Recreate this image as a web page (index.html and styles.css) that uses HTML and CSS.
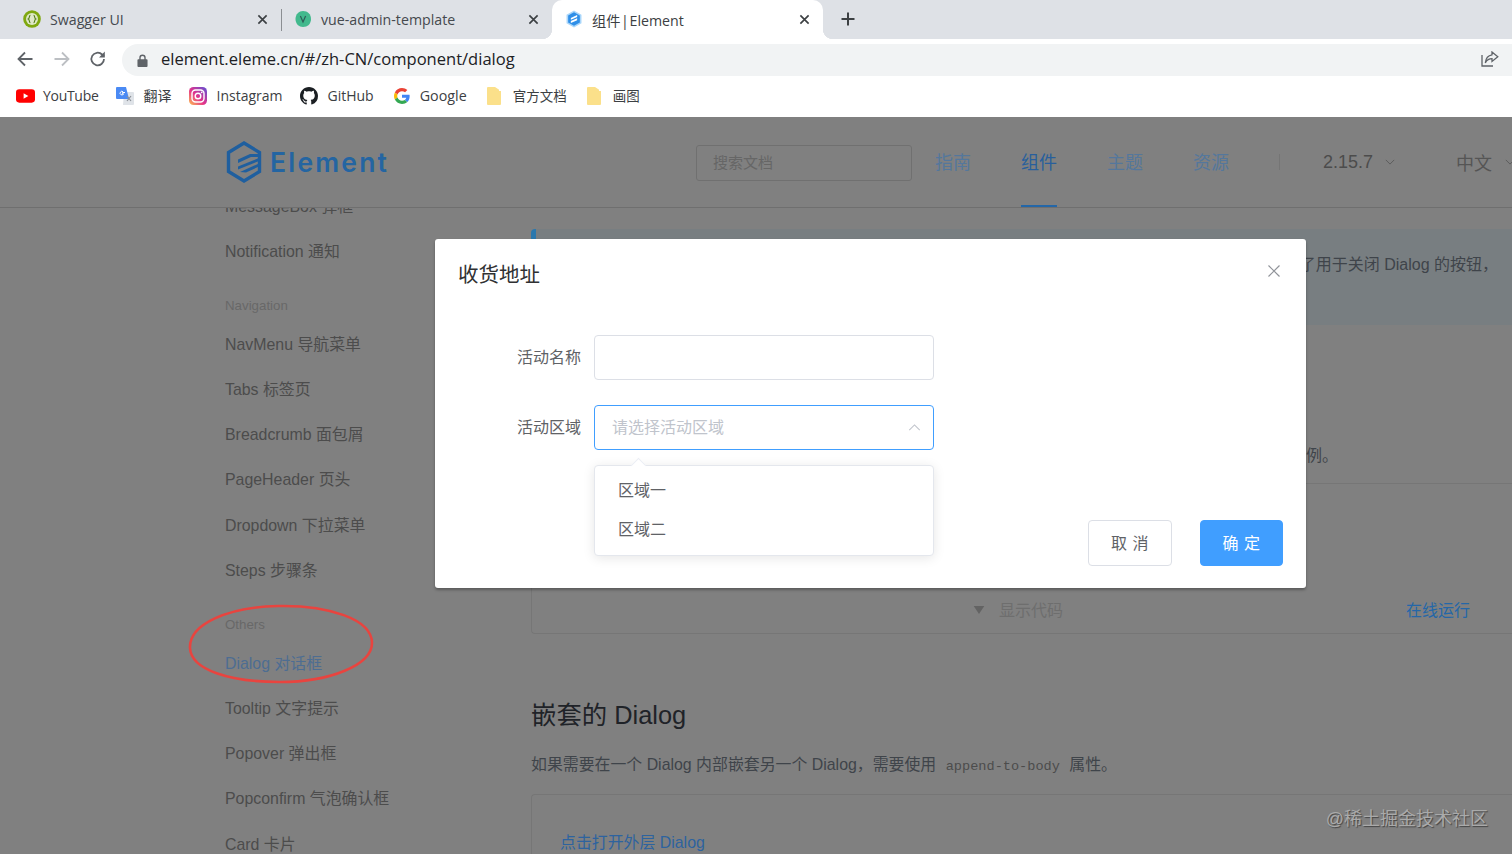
FILE: index.html
```html
<!DOCTYPE html>
<html lang="zh-CN">
<head>
<meta charset="utf-8">
<title>组件 | Element</title>
<link rel="stylesheet" href="styles.css">
</head>
<body>
<div class="tabstrip">
  <div class="tab tab-sep">
    <svg class="favicon" viewBox="0 0 18 18"><circle cx="9" cy="9" r="8.800" fill="#7fa80f"/><circle cx="9" cy="9" r="6" fill="#dfe8c8"/><path d="M7.400 5.400C6 5.400 6.600 8.600 5.400 9c1.200.4.600 3.600 2 3.600M10.600 5.400c1.400 0 .8 3.200 2 3.600-1.200.4-.6 3.600-2 3.600" fill="none" stroke="#4f7a10" stroke-width="1.100"/></svg>
    <span class="tab-title">Swagger UI</span>
    <svg class="tab-close" viewBox="0 0 12 12"><path d="M1.500 1.500l9 9M10.500 1.500l-9 9"/></svg>
  </div>
  <div class="tab">
    <svg class="favicon" viewBox="0 0 18 18"><path d="M9 1c4.600 0 8 3 8 8s-3.400 8-8 8c-4 0-7.500-3-7.500-8S5 1 9 1z" fill="#42b98d"/><path d="M6.400 6l2.600 6 2.600-6" fill="none" stroke="#2f5c58" stroke-width="1.200"/></svg>
    <span class="tab-title">vue-admin-template</span>
    <svg class="tab-close" viewBox="0 0 12 12"><path d="M1.500 1.500l9 9M10.500 1.500l-9 9"/></svg>
  </div>
  <div class="tab tab-active">
    <svg class="favicon" viewBox="0 0 18 20"><path d="M9 .5l8.300 4.800v9.400L9 19.500.7 14.700V5.300z" fill="#a9d6fa"/><path d="M9 2.500l6.500 3.700v7.600L9 17.500l-6.500-3.700V6.200z" fill="#2f8fe8"/><path d="M5.500 8.800l7-3.300v2.200l-7 3.200zM5.500 12.300l7-3.200v2.200l-7 3.200z" fill="#fff"/></svg>
    <span class="tab-title">组件 | Element</span>
    <svg class="tab-close" viewBox="0 0 12 12"><path d="M1.500 1.500l9 9M10.500 1.500l-9 9"/></svg>
  </div>
  <svg class="new-tab" viewBox="0 0 14 14"><path d="M7 .5v13M.5 7h13"/></svg>
</div>

<div class="toolbar">
  <svg class="nav-icon" viewBox="0 0 18 18"><path d="M16.500 9H2.500M9 2.500L2.500 9 9 15.500"/></svg>
  <svg class="nav-icon nav-off" viewBox="0 0 18 18"><path d="M1.500 9h14M9 2.500L15.500 9 9 15.500"/></svg>
  <svg class="nav-icon" viewBox="0 0 18 18"><path d="M15 9a6.300 6.300 0 1 1-1.900-4.500L15 6.300"/><path class="nav-fill" d="M15.800 1.600v5.800H10z"/></svg>
  <div class="urlbar">
    <svg class="lock" viewBox="0 0 12 14"><path d="M2.500 5.500V4a3.500 3.500 0 0 1 7 0v1.500h1a1 1 0 0 1 1 1V13a1 1 0 0 1-1 1h-9a1 1 0 0 1-1-1V6.500a1 1 0 0 1 1-1zM4 5.500h4V4a2 2 0 0 0-4 0z"/></svg>
    <span class="url">element.eleme.cn/#/zh-CN/component/dialog</span>
    <svg class="share" viewBox="0 0 18 16"><path d="M1 4v11h11"/><path d="M11 1l5.800 4.800L11 10.500V7.700C8 7.700 6 8.900 4.300 11.800 4.800 7.200 7.500 4.300 11 3.800z"/></svg>
  </div>
</div>

<div class="bookmarks">
  <div class="bm"><svg class="bm-icon bm-yt" viewBox="0 0 20 14"><rect width="20" height="14" rx="3.500" fill="#f00"/><path d="M8 4l5 3-5 3z" fill="#fff"/></svg><span class="bm-yt-text">YouTube</span></div>
  <div class="bm"><svg class="bm-icon" viewBox="0 0 18 18"><path d="M8 5h9a1 1 0 0 1 1 1v11a1 1 0 0 1-1 1H7z" fill="#dfe3e8"/><path d="M1 0h9l3 12H1a1 1 0 0 1-1-1V1a1 1 0 0 1 1-1z" fill="#4a8af4"/><path d="M9 5.500H6.400v1.300h1.200a1.800 1.800 0 1 1-.5-2" fill="none" stroke="#fff" stroke-width="1"/><path d="M11 9l4 5M15 9l-4 5" stroke="#8a8f96" stroke-width="1.200"/></svg><span>翻译</span></div>
  <div class="bm"><svg class="bm-icon" viewBox="0 0 18 18"><defs><linearGradient id="ig" x1="0" y1="1" x2="1" y2="0"><stop offset="0" stop-color="#fdc04f"/><stop offset=".45" stop-color="#e5338a"/><stop offset="1" stop-color="#5b50d6"/></linearGradient></defs><rect width="18" height="18" rx="4.500" fill="url(#ig)"/><rect x="3" y="3" width="12" height="12" rx="3.500" fill="none" stroke="#fff" stroke-width="1.400"/><circle cx="9" cy="9" r="2.800" fill="none" stroke="#fff" stroke-width="1.400"/><circle cx="12.700" cy="5.300" r=".9" fill="#fff"/></svg><span>Instagram</span></div>
  <div class="bm"><svg class="bm-icon" viewBox="0 0 16 16"><path fill="#1b1f23" d="M8 0C3.580 0 0 3.580 0 8c0 3.540 2.290 6.530 5.470 7.590.4.070.55-.17.55-.38 0-.19-.01-.82-.01-1.490-2.010.37-2.530-.49-2.690-.94-.09-.23-.48-.94-.82-1.130-.28-.15-.68-.52-.01-.53.63-.01 1.080.58 1.230.82.72 1.210 1.870.87 2.330.66.07-.52.28-.87.51-1.070-1.780-.2-3.640-.89-3.640-3.950 0-.87.31-1.590.82-2.150-.08-.2-.36-1.020.08-2.120 0 0 .67-.21 2.200.82.64-.18 1.320-.27 2-.27.68 0 1.360.09 2 .27 1.530-1.040 2.200-.82 2.200-.82.44 1.100.16 1.920.08 2.120.51.56.82 1.270.82 2.150 0 3.070-1.870 3.750-3.650 3.950.29.25.54.73.54 1.480 0 1.070-.01 1.930-.01 2.200 0 .21.15.46.55.38A8.013 8.013 0 0016 8c0-4.420-3.580-8-8-8z"/></svg><span>GitHub</span></div>
  <div class="bm bm-wide bm-google"><svg class="bm-icon bm-g" viewBox="0 0 48 48"><path fill="#EA4335" d="M24 9.500c3.540 0 6.710 1.220 9.210 3.600l6.850-6.850C35.900 2.380 30.470 0 24 0 14.620 0 6.510 5.380 2.560 13.220l7.980 6.190C12.430 13.720 17.740 9.500 24 9.500z"/><path fill="#4285F4" d="M46.980 24.550c0-1.570-.15-3.090-.38-4.550H24v9.020h12.940c-.58 2.960-2.260 5.480-4.780 7.180l7.730 6c4.510-4.180 7.090-10.360 7.090-17.650z"/><path fill="#FBBC05" d="M10.530 28.590c-.48-1.450-.76-2.990-.76-4.590s.27-3.140.76-4.590l-7.980-6.190C.92 16.460 0 20.120 0 24c0 3.880.92 7.540 2.560 10.780l7.970-6.190z"/><path fill="#34A853" d="M24 48c6.480 0 11.930-2.130 15.890-5.810l-7.730-6c-2.150 1.450-4.920 2.300-8.160 2.300-6.260 0-11.570-4.220-13.470-9.910l-7.980 6.190C6.510 42.620 14.620 48 24 48z"/></svg><span>Google</span></div>
  <div class="bm bm-wide"><svg class="bm-folder" viewBox="0 0 14 18"><path d="M1 0h7l6 4v13a1 1 0 0 1-1 1H1a1 1 0 0 1-1-1V1a1 1 0 0 1 1-1z" fill="#fbe08a"/><path d="M12 0h1a1 1 0 0 1 1 1v3h-2z" fill="#fff"/></svg><span class="bm-folder-text">官方文档</span></div>
  <div class="bm bm-wide"><svg class="bm-folder" viewBox="0 0 14 18"><path d="M1 0h7l6 4v13a1 1 0 0 1-1 1H1a1 1 0 0 1-1-1V1a1 1 0 0 1 1-1z" fill="#fbe08a"/><path d="M12 0h1a1 1 0 0 1 1 1v3h-2z" fill="#fff"/></svg><span class="bm-folder-text">画图</span></div>
</div>

<main class="page">
  <header class="site-header">
    <div class="logo">
      <svg class="logo-mark" viewBox="0 0 38 42"><path d="M19 2l15.500 9.500v19L19 40 3.500 30.500v-19z" fill="none" stroke="#1f5f9f" stroke-width="3.400"/><path d="M13 18.500L25 13h9v3H26l-13 6zM13 25.500L34 17v3L13 28.500zM15 31L34 22.500v3l-13 6z" fill="#1f5f9f"/></svg>
      <span class="logo-text">Element</span>
    </div>
    <div class="search">搜索文档</div>
    <nav class="site-nav">
      <a>指南</a>
      <a class="is-active">组件</a>
      <a>主题</a>
      <a>资源</a>
    </nav>
    <span class="nav-divider"></span>
    <div class="picker picker-version">2.15.7<svg class="chev" viewBox="0 0 12 7"><path d="M1 1l5 5 5-5"/></svg></div>
    <div class="picker picker-lang">中文<svg class="chev" viewBox="0 0 12 7"><path d="M1 1l5 5 5-5"/></svg></div>
  </header>

  <div class="layout">
    <aside class="sidebar">
      <ul class="side-list">
        <li>MessageBox 弹框</li>
        <li>Notification 通知</li>
        <li class="side-group">Navigation</li>
        <li>NavMenu 导航菜单</li>
        <li>Tabs 标签页</li>
        <li>Breadcrumb 面包屑</li>
        <li>PageHeader 页头</li>
        <li>Dropdown 下拉菜单</li>
        <li>Steps 步骤条</li>
        <li class="side-group">Others</li>
        <li class="side-active">Dialog 对话框</li>
        <li>Tooltip 文字提示</li>
        <li>Popover 弹出框</li>
        <li>Popconfirm 气泡确认框</li>
        <li>Card 卡片</li>
      </ul>
    </aside>
    <section class="content">
      <div class="tip">了用于关闭 Dialog 的按钮，</div>
      <p class="tail">例。</p>
      <div class="demo">
        <div class="demo-foot">
          <svg class="demo-arrow" viewBox="0 0 12 9"><path d="M0 0h12L6 9z"/></svg>
          <span class="demo-show">显示代码</span>
          <a class="demo-run">在线运行</a>
        </div>
      </div>
      <h3 class="section-title">嵌套的 Dialog</h3>
      <p class="section-text">如果需要在一个 Dialog 内部嵌套另一个 Dialog，需要使用 <code>append-to-body</code> 属性。</p>
      <div class="demo demo-second"><a class="demo-link">点击打开外层 Dialog</a></div>
    </section>
  </div>

  <svg class="annotation" viewBox="0 0 186 80"><path d="M2 44C1 20 40 3 90 2c50-1 94 13 94 37 0 22-42 39-92 39C42 78 3 66 2 44z"/></svg>
  <div class="watermark">@稀土掘金技术社区</div>

  <div class="dialog">
    <div class="dialog-head">
      <span class="dialog-title">收货地址</span>
      <svg class="dialog-close" viewBox="0 0 12 12"><path d="M.5.5l11 11M11.500.5l-11 11"/></svg>
    </div>
    <div class="form">
      <div class="form-row">
        <label class="form-label">活动名称</label>
        <div class="input"></div>
      </div>
      <div class="form-row">
        <label class="form-label">活动区域</label>
        <div class="input input-focus">
          <span class="placeholder">请选择活动区域</span>
          <svg class="select-chev" viewBox="0 0 14 8"><path d="M1 7l6-6 6 6"/></svg>
        </div>
      </div>
    </div>
    <div class="dialog-foot">
      <button class="btn">取 消</button>
      <button class="btn btn-primary">确 定</button>
    </div>
    <div class="dropdown">
      <div class="option">区域一</div>
      <div class="option">区域二</div>
    </div>
  </div>
</main>
</body>
</html>
```

FILE: styles.css
```css
* { box-sizing: border-box; }
html, body { margin: 0; padding: 0; height: 100%; overflow: hidden; }
body {
  width: 1512px;
  height: 854px;
  background: #fff;
  font-family: "Liberation Sans", "Noto Sans CJK SC", sans-serif;
  display: flex;
  flex-direction: column;
}
svg { display: block; flex: none; }
ul { list-style: none; margin: 0; padding: 0; }
p, h3 { margin: 0; }

/* browser chrome */
.tabstrip {
  height: 39px;
  flex: none;
  background: #dee1e6;
  display: flex;
  align-items: center;
  font-family: "Open Sans", "Noto Sans CJK SC", sans-serif;
  font-size: 14.200px;
  color: #45494e;
}
.tab {
  width: 271px;
  height: 39px;
  padding: 0 13px;
  display: flex;
  align-items: center;
  gap: 9px;
  position: relative;
}
.tab-sep { width: 281px; padding-left: 23px; }
.tab-sep::after {
  content: "";
  position: absolute;
  right: -1px;
  top: 9px;
  width: 1px;
  height: 22px;
  background: #8b8e92;
}
.favicon { width: 18px; height: 18px; margin-top: -2px; }
.tab-title { flex: 1; white-space: nowrap; }
.tab-close { width: 11px; height: 11px; fill: none; stroke: #3c4043; stroke-width: 1.800; }
.tab-active {
  background: #fff;
  border-radius: 10px 10px 0 0;
  color: #3c4043;
}
.tab-active .tab-title { word-spacing: -3px; }
.tab-active::before,
.tab-active::after {
  content: "";
  position: absolute;
  bottom: 0;
  width: 10px;
  height: 10px;
}
.tab-active::before { left: -10px; background: radial-gradient(circle at 0 0, transparent 10px, #fff 10.500px); }
.tab-active::after { right: -10px; background: radial-gradient(circle at 100% 0, transparent 10px, #fff 10.500px); }
.new-tab { width: 14px; height: 14px; margin-left: 18px; margin-top: -1px; fill: none; stroke: #3c4043; stroke-width: 2; }

.toolbar {
  height: 38px;
  flex: none;
  padding: 5px 0 1px 16px;
  display: flex;
  align-items: center;
  gap: 19px;
}
.nav-icon { width: 18px; height: 18px; margin-top: -2px; fill: none; stroke: #5f6368; stroke-width: 1.800; }
.nav-icon:nth-child(3) { margin-left: -1px; }
.nav-off { stroke: #bcbfc3; }
.nav-fill { fill: #5f6368; stroke: none; }
.urlbar {
  flex: 1;
  height: 32px;
  margin-left: -4px;
  padding: 0 13px 0 15px;
  background: #f1f3f4;
  border-radius: 16px 0 0 16px;
  display: flex;
  align-items: center;
}
.lock { width: 11px; height: 13px; fill: #5f6368; }
.url {
  flex: 1;
  margin: -4px 0 0 13px;
  font-family: "Open Sans", sans-serif;
  font-size: 16.550px;
  color: #202124;
  white-space: nowrap;
}
.share { width: 18px; height: 16px; margin-top: -2px; fill: none; stroke: #5f6368; stroke-width: 1.300; }

.bookmarks {
  height: 40px;
  flex: none;
  padding: 0 0 2px 16px;
  display: flex;
  align-items: center;
  gap: 18px;
  font-family: "Open Sans", "Noto Sans CJK SC", sans-serif;
  font-size: 14px;
  color: #3c4043;
}
.bm { display: flex; align-items: center; gap: 9px; white-space: nowrap; }
.bm span { margin-top: -2px; }
.bm-wide { margin-left: 2px; }
.bm-google { gap: 10px; font-size: 14.300px; }
.bm-icon { width: 18px; height: 18px; }
.bm-yt { width: 19px; height: 14px; margin-right: -1px; }
.bm-yt-text { letter-spacing: -.3px; }
.bm-g { width: 16px; height: 16px; }
.bm-folder { width: 14px; height: 18px; margin-right: 3px; }
.bm-folder-text { font-size: 13.500px; }

/* dimmed page */
.page {
  flex: 1;
  min-height: 0;
  position: relative;
  overflow: hidden;
  background: #808080;
  color: #4c4c4c;
}
.site-header {
  height: 91px;
  padding-left: 225px;
  position: relative;
  z-index: 1;
  background: #808080;
  border-bottom: 1px solid #6f6f6f;
  display: flex;
  align-items: center;
}
.logo { width: 471px; flex: none; display: flex; align-items: center; gap: 7px; color: #2465a2; }
.logo-mark { width: 38px; height: 42px; }
.logo-text {
  font-family: "Inter", sans-serif;
  font-size: 26.500px;
  font-weight: 600;
  letter-spacing: 2.200px;
  line-height: 42px;
}
.search {
  width: 216px;
  height: 36px;
  flex: none;
  margin-top: 1px;
  padding-left: 16px;
  border: 1px solid #707070;
  border-radius: 3px;
  font-size: 15px;
  line-height: 34px;
  color: #666;
}
.site-nav {
  height: 90px;
  flex: none;
  margin-left: 23px;
  display: flex;
  gap: 50px;
  font-size: 18px;
  line-height: 92px;
  color: #54779c;
}
.site-nav a { display: block; width: 36px; height: 90px; }
.site-nav .is-active { color: #285f9c; border-bottom: 2px solid #2467a8; }
.nav-divider { width: 1px; height: 16px; flex: none; margin-left: 50px; background: #757575; }
.picker { display: flex; flex: none; align-items: center; font-size: 18px; color: #4c4c4c; white-space: nowrap; }
.picker-version { margin-left: 43px; gap: 12px; width: 133px; }
.picker-lang { color: #555; gap: 13px; margin-top: -1px; }
.chev { width: 10px; height: 6px; fill: none; stroke: #555; stroke-width: 1; }

.layout { display: flex; height: 646px; }
.sidebar { width: 531px; flex: none; padding-left: 225px; }
.side-list { margin-top: -25.500px; font-size: 15.900px; color: #4c4c4c; }
.side-list li { height: 45.250px; display: flex; align-items: center; white-space: nowrap; }
.side-list .side-group { height: 31px; margin-top: 16.500px; font-size: 13.300px; color: #686868; }
.side-list .side-active { color: #4d6d92; }

.content { flex: 1; min-width: 0; padding-top: 21px; }
.tip {
  height: 96px;
  padding: 23px 14px 0 0;
  background: #787e81;
  border-left: 5px solid #2b78ad;
  border-radius: 4px 0 0 4px;
  text-align: right;
  font-size: 16px;
  line-height: 26px;
  color: #3f444a;
}
.tail { margin-top: 119px; padding-left: 775px; font-size: 16px; line-height: 24px; color: #3f444a; }
.demo {
  margin-top: 15px;
  height: 151px;
  border: 1px solid #767676;
  border-right: 0;
  border-radius: 4px 0 0 4px;
  display: flex;
  align-items: flex-end;
}
.demo-foot {
  flex: 1;
  height: 48px;
  padding-left: 441px;
  display: flex;
  align-items: center;
  font-size: 16px;
}
.demo-arrow { width: 12px; height: 8px; margin-top: 2px; fill: #636363; }
.demo-show { margin-left: 14px; color: #6e6e6e; }
.demo-run { margin-left: 343px; color: #2467a8; }
.section-title { margin-top: 62px; font-size: 25.400px; font-weight: 400; line-height: 38px; color: #1f2328; }
.section-text { margin-top: 19px; font-size: 15.900px; line-height: 24px; color: #3f444a; white-space: nowrap; }
code { margin: 0 5px; font-family: "Liberation Mono", monospace; font-size: 13.600px; color: #4c4c4c; }
.demo-second { margin-top: 15px; height: 80px; padding: 36px 0 0 28px; align-items: flex-start; }
.demo-link { font-size: 15.900px; line-height: 24px; color: #2d639f; }

.annotation {
  position: absolute;
  left: 188px;
  top: 487px;
  width: 186px;
  height: 80px;
  fill: none;
  stroke: #e8443f;
  stroke-width: 2.600;
}
.watermark {
  position: absolute;
  right: 24px;
  top: 690px;
  font-size: 18px;
  line-height: 24px;
  color: #aaa;
  text-shadow: 1px 1px 1px #444;
}

/* dialog */
.dialog {
  position: absolute;
  left: 435px;
  top: 122px;
  width: 871px;
  height: 349px;
  padding: 23px 23px 22px;
  background: #fff;
  border-radius: 3px;
  box-shadow: 0 2px 3px rgba(0, 0, 0, .3);
  display: flex;
  flex-direction: column;
}
.dialog-head { height: 26px; padding-right: 3px; display: flex; justify-content: space-between; align-items: flex-start; }
.dialog-title { font-size: 20.500px; line-height: 26px; color: #303133; }
.dialog-close { width: 12px; height: 12px; margin-top: 3px; fill: none; stroke: #909399; stroke-width: 1.200; }
.form { margin-top: 47px; display: flex; flex-direction: column; gap: 25px; }
.form-row { display: flex; align-items: center; }
.form-label { width: 123px; padding-bottom: 4px; font-size: 16px; text-align: right; color: #606266; }
.input {
  width: 340px;
  height: 45px;
  margin-left: 13px;
  padding: 0 12px 0 17px;
  background: #fff;
  border: 1px solid #dcdfe6;
  border-radius: 4px;
  display: flex;
  align-items: center;
  justify-content: space-between;
}
.input-focus { border-color: #409eff; }
.placeholder { padding-bottom: 4px; font-size: 16px; color: #c0c4cc; }
.select-chev { width: 13px; height: 7px; fill: none; stroke: #c0c4cc; stroke-width: 1.200; }
.dialog-foot { margin-top: auto; display: flex; justify-content: flex-end; gap: 28px; }
.btn {
  width: 84px;
  height: 46px;
  padding: 0 0 2px;
  background: #fff;
  border: 1px solid #dcdfe6;
  border-radius: 4px;
  font-family: inherit;
  font-size: 16px;
  letter-spacing: .6px;
  color: #606266;
}
.btn-primary { width: 83px; background: #409eff; border-color: #409eff; color: #fff; }
.dropdown {
  position: absolute;
  left: 159px;
  top: 226px;
  width: 340px;
  height: 91px;
  padding-top: 5px;
  background: #fff;
  border: 1px solid #e4e7ed;
  border-radius: 4px;
  box-shadow: 0 2px 12px rgba(0, 0, 0, .1);
}
.dropdown::before {
  content: "";
  position: absolute;
  left: 38px;
  top: -6px;
  width: 10px;
  height: 10px;
  background: #fff;
  border-left: 1px solid #ebeef5;
  border-top: 1px solid #ebeef5;
  transform: rotate(45deg);
}
.option { height: 39px; padding-left: 23px; font-size: 16px; line-height: 39px; color: #606266; position: relative; }
```
